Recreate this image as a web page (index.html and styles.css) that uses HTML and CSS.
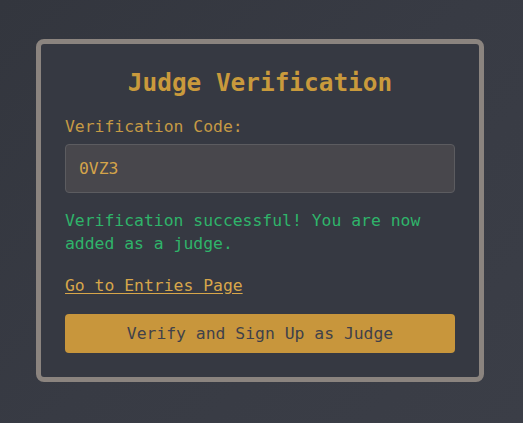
FILE: index.html
```html
<!DOCTYPE html>
<html lang="en">
<head>
  <meta charset="UTF-8">
  <title>Judge Verification</title>
  <link rel="stylesheet" href="styles.css">
</head>
<body>

  <div class="verify-card">
    <h2 class="verify-title">Judge Verification</h2>
    <label for="codeInput" class="code-label">Verification Code:</label>
    <input type="text" id="codeInput" class="code-input" value="0VZ3" />
    <p class="success-msg">Verification successful! You are now added as a judge.</p>
    <a href="#" class="entries-link">Go to Entries Page</a>
    <button class="verify-btn">Verify and Sign Up as Judge</button>
  </div>

</body>
</html>
```

FILE: styles.css
```css
html, body {
  height: 100%;
}
body {
  box-sizing: border-box;
  margin: 0;
  padding: 0 3px 2px 0;
  font-family: "DejaVu Sans Mono", "Liberation Mono", monospace;
  font-size: 16.4px;
  background: linear-gradient(135deg, #33363e 0%, #383b44 50%, #3b3e47 100%);
  display: flex;
  justify-content: center;
  align-items: center;
}
.verify-card {
  box-sizing: border-box;
  width: 448px;
  padding: 24px;
  border: 5px solid #8b847f;
  border-radius: 8px;
  background: #363942;
  display: flex;
  flex-direction: column;
}
.verify-title {
  margin: 0 0 19px;
  text-align: center;
  font-size: 24.4px;
  line-height: 30px;
  font-weight: bold;
  color: #c99a3c;
}
.code-label {
  display: block;
  line-height: 20px;
  color: #c59a45;
  margin-bottom: 7px;
}
.code-input {
  box-sizing: border-box;
  height: 49px;
  width: 100%;
  padding: 0 13px;
  font-family: inherit;
  font-size: 16.4px;
  color: #d4a44a;
  background: #48474c;
  border: 1px solid #5c5c60;
  border-radius: 4px;
  outline: none;
}
.success-msg {
  margin: 16px 0 0;
  line-height: 23px;
  color: #2fb46a;
}
.entries-link {
  align-self: flex-start;
  margin-top: 19px;
  line-height: 23px;
  color: #d7a64a;
  text-decoration: underline;
  text-underline-offset: 2px;
}
.verify-btn {
  margin-top: 17px;
  height: 39px;
  width: 100%;
  font-family: inherit;
  font-size: 16.4px;
  color: #40414a;
  background: #c8963c;
  border: none;
  border-radius: 4px;
  cursor: pointer;
}
```
